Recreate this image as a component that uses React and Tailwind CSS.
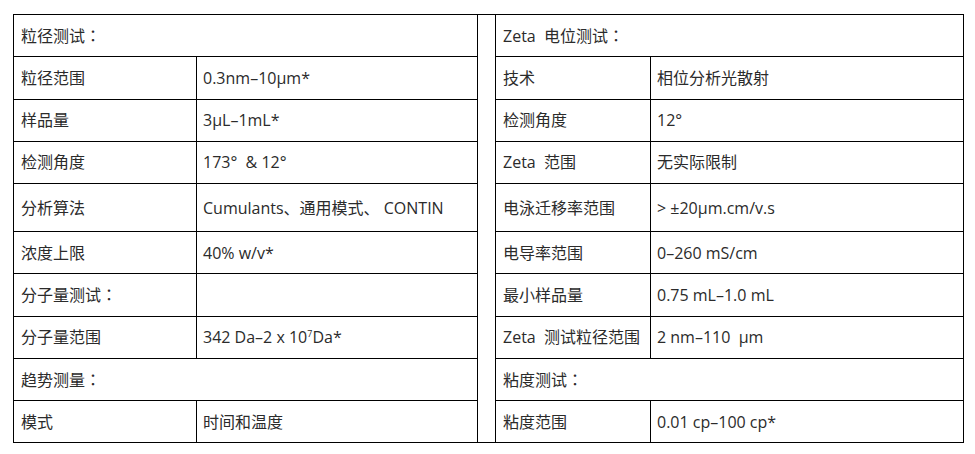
const Colon = () => <span className="font-['Noto_Sans_CJK_TC',sans-serif]">：</span>;

const left = [
  { head: <>粒径测试<Colon /></> },
  { k: '粒径范围', v: '0.3nm–10µm*' },
  { k: '样品量', v: '3µL–1mL*' },
  { k: '检测角度', v: '173°  & 12°' },
  { k: '分析算法', v: 'Cumulants、通用模式、 CONTIN', tall: true },
  { k: '浓度上限', v: '40% w/v*' },
  { k: <>分子量测试<Colon /></>, v: '' },
  { k: '分子量范围', v: <>342 Da–2 x 10<sup className="text-[9px] -top-[6px]">7</sup>Da*</> },
  { head: <>趋势测量<Colon /></> },
  { k: '模式', v: '时间和温度' },
];

const right = [
  { head: <>Zeta  电位测试<Colon /></> },
  { k: '技术', v: '相位分析光散射' },
  { k: '检测角度', v: '12°' },
  { k: 'Zeta  范围', v: '无实际限制' },
  { k: '电泳迁移率范围', v: '> ±20µm.cm/v.s' },
  { k: '电导率范围', v: '0–260 mS/cm' },
  { k: '最小样品量', v: '0.75 mL–1.0 mL' },
  { k: 'Zeta  测试粒径范围', v: '2 nm–110  µm' },
  { head: <>粘度测试<Colon /></> },
  { k: '粘度范围', v: '0.01 cp–100 cp*' },
];

const cell = 'border border-black px-[6px] align-middle whitespace-pre';

function Cells({ row }) {
  if (row.head) {
    return <td colSpan={2} className={`${cell} pl-[7px]`}>{row.head}</td>;
  }
  return (
    <>
      <td className={`${cell} pl-[7px]`}>{row.k}</td>
      <td className={cell}>{row.v}</td>
    </>
  );
}

export default function App() {
  return (
    <div className="w-[975px] h-[454px] bg-white pt-[14px] pl-[13px] text-[16px] leading-[20px] text-[#2b2b2b] font-['Open_Sans','Noto_Sans_CJK_SC',sans-serif]">
      <table className="border-collapse table-fixed w-[950px]">
        <colgroup>
          <col className="w-[183px]" />
          <col className="w-[281px]" />
          <col className="w-[18px]" />
          <col className="w-[155px]" />
          <col className="w-[313px]" />
        </colgroup>
        <tbody>
          {left.map((row, i) => (
            <tr key={i} className={row.tall ? 'h-[48px]' : 'h-[42.25px]'}>
              <Cells row={row} />
              {i === 0 && <td rowSpan={10} className="border border-black" />}
              <Cells row={right[i]} />
            </tr>
          ))}
        </tbody>
      </table>
    </div>
  );
}
